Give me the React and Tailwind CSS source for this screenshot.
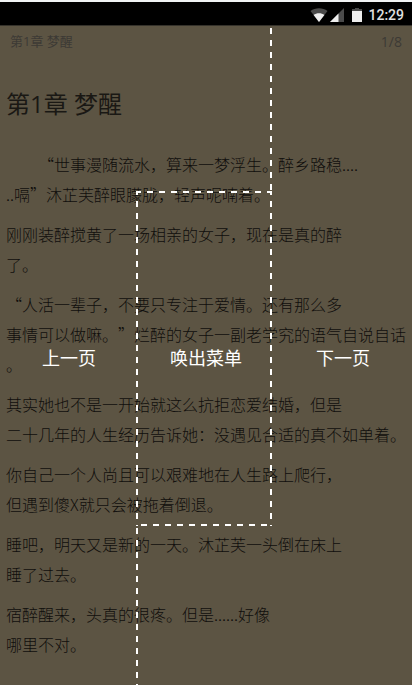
const paragraphs = [
  ['\u3000\u3000“世事漫随流水，算来一梦浮生。醉乡路稳....', '..嗝”沐芷芙醉眼朦胧，轻声呢喃着。'],
  ['刚刚装醉搅黄了一场相亲的女子，现在是真的醉', '了。'],
  ['“人活一辈子，不要只专注于爱情。还有那么多', '事情可以做嘛。”烂醉的女子一副老学究的语气自说自话', '。'],
  ['其实她也不是一开始就这么抗拒恋爱结婚，但是', '二十几年的人生经历告诉她：没遇见合适的真不如单着。'],
  ['你自己一个人尚且可以艰难地在人生路上爬行，', '但遇到傻X就只会被拖着倒退。'],
  ['睡吧，明天又是新的一天。沐芷芙一头倒在床上', '睡了过去。'],
  ['宿醉醒来，头真的很疼。但是......好像', '哪里不对。'],
];

function StatusBar() {
  return (
    <div className="flex h-[26px] items-center justify-end border-t-2 border-b border-t-[#f1f3f4] border-b-[#35322b] bg-black pt-0.5 pr-2">
      {/* Wifi */}
      <svg className="mr-0.5 h-4 w-[18px]" viewBox="0 0 18 16">
        <path d="M9 15 0.5 4C5 0.2 13 0.2 17.5 4Z" fill="#4a4a4a" />
        <path d="M9 15 3.6 8C6.5 5.6 11.5 5.6 14.4 8Z" fill="#eee" />
      </svg>
      {/* Signal */}
      <svg className="mr-2 h-4 w-[14px]" viewBox="0 0 14 16">
        <path d="M0 15 14 1V15Z" fill="#4a4a4a" />
        <path d="M0 15 8.5 6.5V15Z" fill="#eee" />
      </svg>
      {/* Battery */}
      <svg className="mr-1.5 h-4 w-[10px]" viewBox="0 0 10 16">
        <path d="M3 1h4v1h3v3H0V2h3Z" fill="#4a4a4a" />
        <path d="M0 4h10v11H0Z" fill="#eee" />
      </svg>
      <span className="font-['Roboto',sans-serif] text-sm font-medium text-[#e0e0e0]">12:29</span>
    </div>
  );
}

// Dashes are 6px on, 6px off, 2px thick; border-dashed can't set that rhythm
function TapGuide() {
  return (
    <div className="absolute inset-0 grid grid-cols-[33%_33%_34%] grid-rows-[33fr_67fr_33fr] text-lg text-white">
      <div className="col-span-2 bg-[linear-gradient(#fff_50%,#0000_50%)] bg-repeat-y [background-position:100%_2px] [background-size:2px_12px]" />
      <div />
      <button type="button" className="pb-1 pl-0.5">上一页</button>
      <button
        type="button"
        className="bg-[linear-gradient(90deg,#fff_50%,#0000_50%),linear-gradient(90deg,#fff_50%,#0000_50%),linear-gradient(#fff_50%,#0000_50%),linear-gradient(#fff_50%,#0000_50%)] pb-1 pl-1 [background-position:11px_0,5px_100%,0_10px,100%_10px] [background-repeat:repeat-x,repeat-x,repeat-y,repeat-y] [background-size:12px_2px,12px_2px,2px_12px,2px_12px]"
      >
        唤出菜单
      </button>
      <button type="button" className="pb-1 pl-0.5">下一页</button>
      <div />
      <div className="col-span-2 bg-[linear-gradient(#fff_50%,#0000_50%)] bg-repeat-y [background-position:0_2px] [background-size:2px_12px]" />
    </div>
  );
}

export default function App() {
  return (
    <div className="flex min-h-screen flex-col bg-[#5c5443] font-['Noto_Sans_CJK_SC',sans-serif]">
      <StatusBar />
      <main className="relative flex-1 pb-8">
        <header className="flex h-8 items-center justify-between px-2.5 font-['Open_Sans','Noto_Sans_CJK_SC',sans-serif] text-[13px] text-[#3c3a35]">
          <span>第1章 梦醒</span>
          <span className="text-sm">1/8</span>
        </header>
        <article className="px-1.5 text-[#100e0c]">
          <h1 className="pt-7 pb-[27px] font-['Open_Sans','Noto_Sans_CJK_SC',sans-serif] text-2xl leading-9 text-[#1a1814]">第1章 梦醒</h1>
          <div className="flex flex-col gap-2.5 text-base leading-[30px] font-light [text-spacing-trim:space-all]">
            {paragraphs.map((lines) => (
              <p key={lines[0]}>
                {lines.map((line) => (
                  <span key={line} className="block whitespace-nowrap">{line}</span>
                ))}
              </p>
            ))}
          </div>
        </article>
        <TapGuide />
      </main>
    </div>
  );
}
